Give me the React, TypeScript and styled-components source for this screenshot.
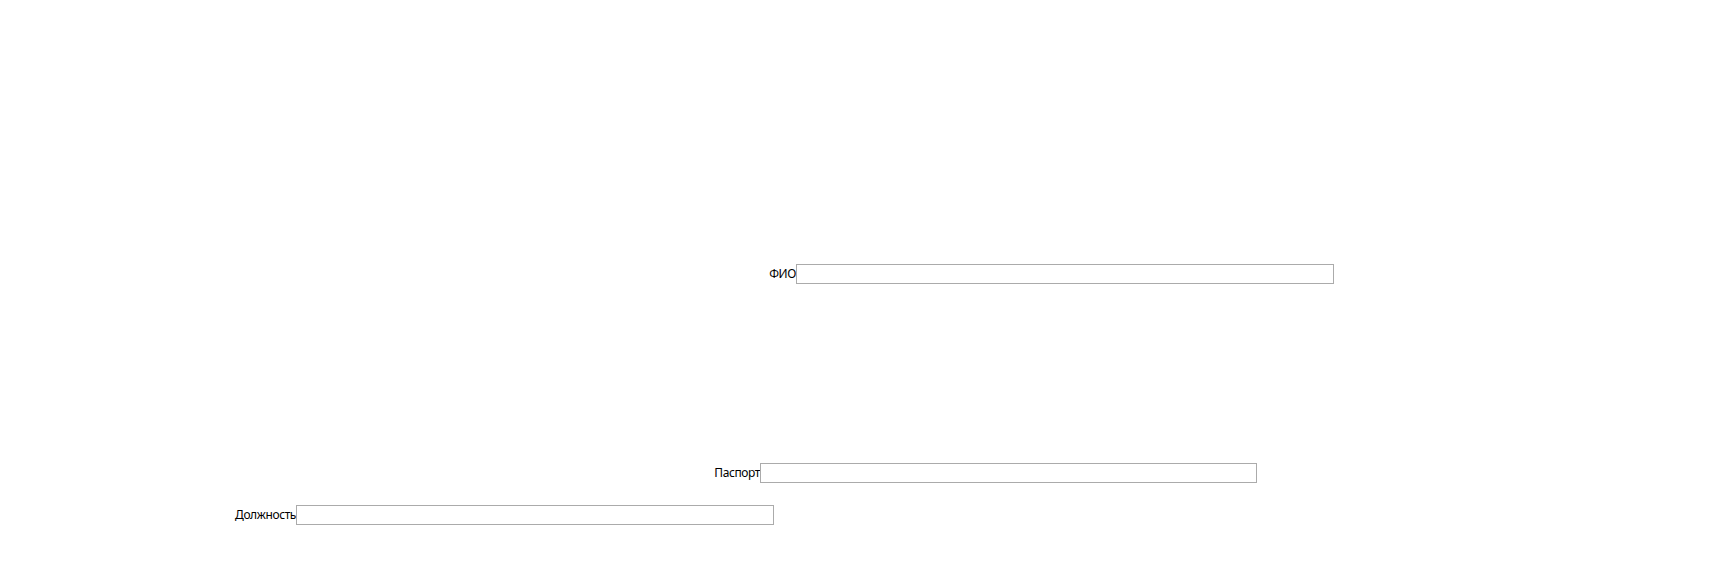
import styled, { createGlobalStyle } from 'styled-components';

const GlobalStyle = createGlobalStyle`
  html, body {
    margin: 0;
    padding: 0;
    background: #ffffff;
  }
  body {
    font-family: "Noto Sans", "Open Sans", sans-serif;
    font-size: 12px;
    color: #000000;
  }
`;

const Page = styled.div`
  width: 1734px;
  height: 577px;
  display: flex;
  flex-direction: column;
  overflow: hidden;
`;

const Row = styled.div<{ $top: number; $inputLeft: number; $inputWidth: number }>`
  display: grid;
  grid-template-columns: ${(p) => p.$inputLeft}px ${(p) => p.$inputWidth}px;
  align-items: center;
  margin-top: ${(p) => p.$top}px;
  height: 20px;
`;

const Label = styled.label`
  justify-self: end;
  padding-top: 1px;
  line-height: 20px;
  letter-spacing: -0.4px;
  white-space: nowrap;
`;

const Field = styled.input`
  box-sizing: border-box;
  width: 100%;
  height: 20px;
  margin: 0;
  padding: 0 3px;
  border: 1px solid #ababab;
  border-radius: 0;
  outline: none;
  font: inherit;
  background: #ffffff;
`;

const fields = [
  { label: 'ФИО', top: 263, left: 796, width: 538 },
  { label: 'Паспорт', top: 179, left: 760, width: 497 },
  { label: 'Должность', top: 22, left: 296, width: 478 },
];

const App = () => {
  return (
    <>
      <GlobalStyle />
      <Page>
        {fields.map((f) => (
          <Row key={f.label} $top={f.top} $inputLeft={f.left} $inputWidth={f.width}>
            <Label>{f.label}</Label>
            <Field type="text" />
          </Row>
        ))}
      </Page>
    </>
  );
};

export default App;
